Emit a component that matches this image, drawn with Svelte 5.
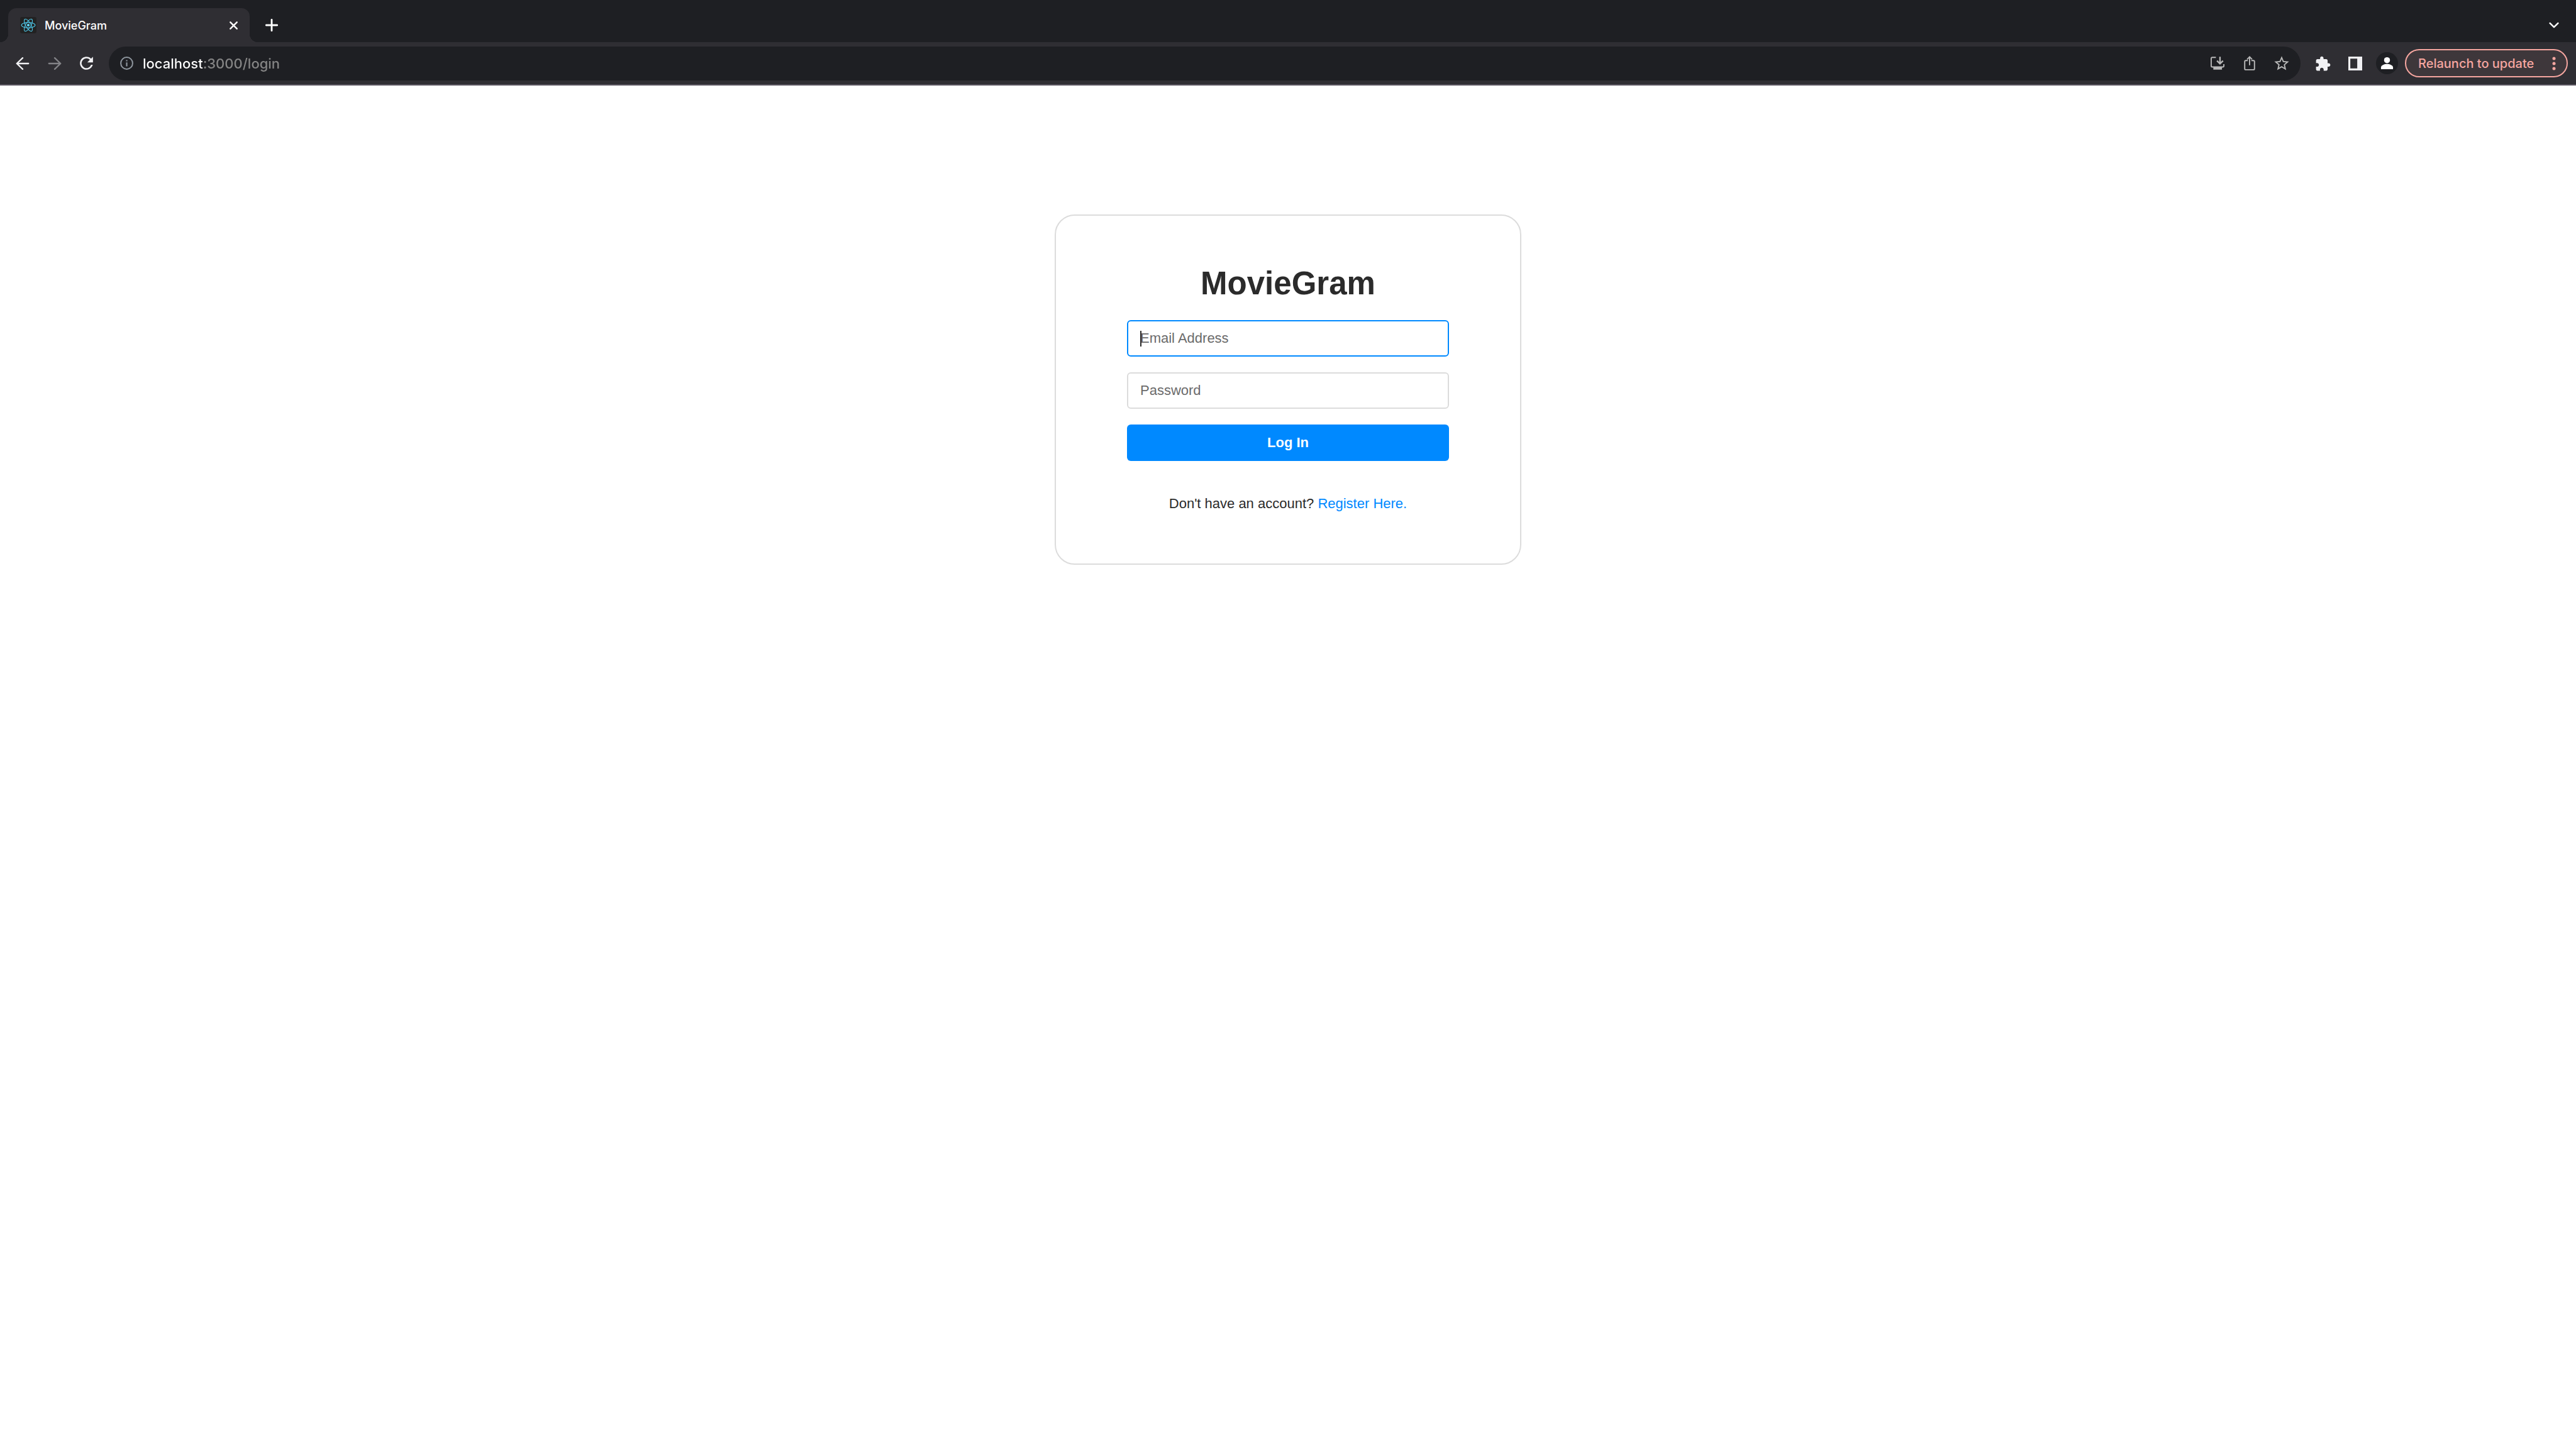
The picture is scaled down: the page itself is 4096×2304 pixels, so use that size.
<script>
  let email = $state('');
  let password = $state('');
  let address = $state('localhost:3000/login');
</script>

<div class="browser">
  <header class="chrome">
    <div class="tabs">
      <div class="tab">
        <svg class="favicon" viewBox="0 0 32 32" aria-hidden="true">
          <rect width="32" height="32" rx="4" fill="#222222" />
          <g fill="none" stroke="#4fc8ea" stroke-width="1.3">
            <ellipse cx="16" cy="16" rx="13.4" ry="5.1" />
            <ellipse cx="16" cy="16" rx="13.4" ry="5.1" transform="rotate(60 16 16)" />
            <ellipse cx="16" cy="16" rx="13.4" ry="5.1" transform="rotate(120 16 16)" />
          </g>
          <circle cx="16" cy="16" r="2.6" fill="#61dafb" />
        </svg>
        <span class="tab-title">MovieGram</span>
        <button class="close" aria-label="Close tab">
          <svg width="13" height="13" viewBox="0 0 16 16" class="line"><path d="M1.6 1.6 14.4 14.4M14.4 1.6 1.6 14.4" stroke-width="3" /></svg>
        </button>
      </div>
      <button class="strip-button new-tab" aria-label="New tab">
        <svg width="20" height="20" viewBox="0 0 24 24" class="line"><path d="M12 1.5V22.5M1.5 12H22.5" stroke-width="3.4" /></svg>
      </button>
      <button class="strip-button search-tabs" aria-label="Search tabs">
        <svg width="16" height="10" viewBox="0 0 20 12" class="line"><path d="M2 2 10 10 18 2" stroke-width="3" /></svg>
      </button>
    </div>

    <div class="toolbar">
      <nav class="group" aria-label="Navigation">
        <button class="tool" aria-label="Back">
          <svg width="22" height="20" viewBox="0 0 28 26" class="line"><path d="M26 13H2M14 1.5 2 13 14 24.5" stroke-width="3" /></svg>
        </button>
        <button class="tool muted" aria-label="Forward" disabled>
          <svg width="22" height="20" viewBox="0 0 28 26" class="line"><path d="M2 13H26M14 1.5 26 13 14 24.5" stroke-width="3" /></svg>
        </button>
        <button class="tool" aria-label="Reload">
          <svg width="31" height="31" viewBox="0 0 24 24" fill="currentColor"><path d="M17.65 6.35A8 8 0 1 0 19.73 14h-2.08A6 6 0 1 1 16.22 7.78L13 11h7V4z" /></svg>
        </button>
      </nav>

      <div class="omnibox">
        <svg class="info" viewBox="0 0 27 27" aria-hidden="true">
          <circle cx="13.5" cy="13.5" r="12.1" fill="none" stroke="currentColor" stroke-width="2.6" />
          <path d="M12.1 12h2.8v8h-2.8zM12.1 7h2.8v2.8h-2.8z" fill="currentColor" />
        </svg>
        <input class="address" type="text" aria-label="Address" bind:value={address} />
        <button class="tool soft" aria-label="Install app">
          <svg width="22" height="21" viewBox="0 0 28 26" fill="none" stroke="currentColor" stroke-width="2.4">
            <path d="M10.7 1.2H3.4Q1.2 1.2 1.2 3.4V18.5Q1.2 20.7 3.4 20.7H24.6Q26.8 20.7 26.8 18.5V15" />
            <path d="M5.5 21H23V26H5.5z" fill="currentColor" stroke="none" />
            <path d="M19 0V14M12.9 8 19 14.1 25.1 8" stroke-width="3" />
          </svg>
        </button>
        <button class="tool soft" aria-label="Share">
          <svg width="18" height="23" viewBox="0 0 22 29" fill="none" stroke="currentColor" stroke-width="2.4">
            <path d="M7.5 9.2H3.4Q1.2 9.2 1.2 11.4V25.4Q1.2 27.6 3.4 27.6H18.6Q20.8 27.6 20.8 25.4V11.4Q20.8 9.2 18.6 9.2H14.5" />
            <path d="M11 18.5V2M6 6.7 11 1.7 16 6.7" />
          </svg>
        </button>
        <button class="tool soft" aria-label="Bookmark this page">
          <svg width="28" height="28" viewBox="0 0 24 24" fill="currentColor"><path d="m22 9.24-7.19-.62L12 2 9.19 8.63 2 9.24l5.46 4.73L5.82 21 12 17.27 18.18 21l-1.63-7.03L22 9.24zM12 15.4l-3.76 2.27 1-4.28-3.32-2.88 4.38-.38L12 6.1l1.71 4.04 4.38.38-3.32 2.88 1 4.28L12 15.4z" /></svg>
        </button>
      </div>

      <div class="group">
        <button class="tool" aria-label="Extensions">
          <svg width="26" height="26" viewBox="0.5 -0.5 24 24" fill="currentColor"><path d="M20.5 11H19V7c0-1.1-.9-2-2-2h-4V3.5C13 2.12 11.88 1 10.5 1S8 2.12 8 3.5V5H4c-1.1 0-1.99.9-1.99 2v3.8H3.5c1.49 0 2.7 1.21 2.7 2.7s-1.21 2.7-2.7 2.7H2V20c0 1.1.9 2 2 2h3.8v-1.5c0-1.49 1.21-2.7 2.7-2.7s2.7 1.21 2.7 2.7V22H17c1.1 0 2-.9 2-2v-4h1.5c1.38 0 2.5-1.12 2.5-2.5S21.88 11 20.5 11z" /></svg>
        </button>
        <button class="tool" aria-label="Side panel">
          <svg width="22" height="22" viewBox="0 0 28 28" fill="currentColor" fill-rule="evenodd"><path d="M0 0H28V28H0zM4 4V24H18V4z" /></svg>
        </button>
        <button class="tool" aria-label="Profile">
          <svg width="35" height="35" viewBox="0 0 44 44">
            <circle cx="22" cy="22" r="22" fill="#1e1f23" />
            <g fill="#ffffff"><circle cx="22" cy="16" r="6" /><path d="M10 34V30.5C10 26 17 23.600 22 23.600S34 26 34 30.5V34z" /></g>
          </svg>
        </button>
      </div>

      <button class="relaunch">
        <span>Relaunch to update</span>
        <svg width="6" height="28" viewBox="0 0 6 28" fill="currentColor" aria-hidden="true"><circle cx="3" cy="6" r="2.5" /><circle cx="3" cy="14" r="2.5" /><circle cx="3" cy="22" r="2.5" /></svg>
      </button>
    </div>
  </header>

  <main>
    <section class="card">
      <h1>MovieGram</h1>
      <form onsubmit={(event) => event.preventDefault()}>
        <div class="field active">
          <input type="email" aria-label="Email Address" placeholder="Email Address" bind:value={email} />
          <span class="caret"></span>
        </div>
        <div class="field">
          <input type="password" aria-label="Password" placeholder="Password" bind:value={password} />
        </div>
        <button class="submit" type="submit">Log In</button>
      </form>
      <p>Don't have an account? <a href="/register">Register Here.</a></p>
    </section>
  </main>
</div>

<style>
  :global(body) {
    margin: 0;
    background: #ffffff;
  }

  .browser {
    min-height: 100vh;
    font-family: 'Liberation Sans', Arial, sans-serif;
    font-size: 22px;
    color: #2b2b2b;
  }

  button,
  input {
    box-sizing: border-box;
    margin: 0;
    padding: 0;
    border: 0;
    background: none;
    color: inherit;
    font: inherit;
    outline: none;
  }

  button {
    display: flex;
    align-items: center;
    justify-content: center;
    cursor: pointer;
  }

  svg {
    display: block;
    flex: none;
  }

  .line {
    fill: none;
    stroke: currentColor;
    stroke-linecap: round;
    stroke-linejoin: round;
  }

  .chrome {
    background: #1e1f23;
    color: #f1f1f4;
    font-family: Inter, Roboto, sans-serif;
    font-weight: 500;
  }

  .tabs {
    display: flex;
    padding: 13px 13px 0;
  }

  .tab {
    position: relative;
    box-sizing: border-box;
    display: flex;
    align-items: center;
    gap: 13px;
    width: 384px;
    height: 54px;
    padding: 0 13px 0 19px;
    border-radius: 13px 13px 0 0;
    background: #2f2e33;
    color: #ffffff;
  }

  /* Outward curves at the foot of the active tab */
  .tab::before,
  .tab::after {
    content: '';
    position: absolute;
    bottom: 0;
    width: 13px;
    height: 13px;
  }

  .tab::before {
    right: 100%;
    background: radial-gradient(circle at 0 0, transparent 13px, #2f2e33 13px);
  }

  .tab::after {
    left: 100%;
    background: radial-gradient(circle at 100% 0, transparent 13px, #2f2e33 13px);
  }

  .favicon {
    width: 26px;
    height: 26px;
  }

  .tab-title {
    flex: 1;
    font-size: 18px;
  }

  .close {
    width: 26px;
    height: 26px;
  }

  .strip-button {
    width: 44px;
    height: 54px;
    color: #ffffff;
  }

  .new-tab {
    margin-left: 13px;
  }

  .search-tabs {
    margin-left: auto;
  }

  .toolbar {
    display: flex;
    align-items: center;
    height: 67px;
    padding: 0 13px 0 10px;
    border-bottom: 2px solid #5a5660;
    background: #2f2e33;
  }

  .group {
    display: flex;
  }

  .tool {
    width: 51px;
    height: 51px;
  }

  .muted {
    color: #838387;
  }

  .soft {
    color: #b9b9b9;
  }

  .omnibox {
    flex: 1;
    box-sizing: border-box;
    display: flex;
    align-items: center;
    height: 54px;
    margin: 0 10px;
    padding: 0 5px 0 18px;
    border-radius: 27px;
    background: #1e1f23;
  }

  .info {
    width: 21px;
    height: 21px;
    margin-right: 15px;
    color: #8f979f;
  }

  /* Host in white, the rest of the address in grey */
  .address {
    flex: 1;
    min-width: 0;
    height: 40px;
    font-size: 22px;
    color: #ffffff;
    background: linear-gradient(to right, #ffffff 97px, #858585 97px);
    background-clip: text;
    -webkit-background-clip: text;
    -webkit-text-fill-color: transparent;
  }

  .relaunch {
    justify-content: space-between;
    width: 259px;
    height: 45px;
    margin-left: 3px;
    padding: 0 17px 0 19px;
    border: 2px solid #f6a6a0;
    border-radius: 23px;
    background: #3e373b;
    color: #f6a6a0;
    font-size: 20px;
    white-space: nowrap;
  }

  main {
    display: flex;
    justify-content: center;
    padding: 205px 20px 40px;
  }

  .card {
    box-sizing: border-box;
    width: 742px;
    max-width: 100%;
    padding: 78px 113px 81px;
    border: 2px solid #dcdcdc;
    border-radius: 32px;
    text-align: center;
  }

  h1 {
    margin: 0 0 28px;
    font-size: 51px;
    line-height: 60px;
  }

  form {
    display: grid;
    gap: 25px;
  }

  .field {
    position: relative;
    display: flex;
  }

  .field input {
    width: 100%;
    height: 58px;
    padding: 0 19px;
    border: 2px solid #dcdcdc;
    border-radius: 6px;
  }

  .field input::placeholder {
    color: #6b6b6b;
    opacity: 1;
  }

  .active input {
    border-color: #0089ff;
  }

  .caret {
    position: absolute;
    top: 17px;
    left: 21px;
    width: 2px;
    height: 25px;
    background: #2b2b2b;
  }

  .submit {
    height: 58px;
    border-radius: 6px;
    background: #0089ff;
    color: #ffffff;
    font-weight: 700;
  }

  p {
    margin: 54px 0 0;
    line-height: 28px;
  }

  a {
    color: #0089ff;
    text-decoration: none;
  }
</style>
